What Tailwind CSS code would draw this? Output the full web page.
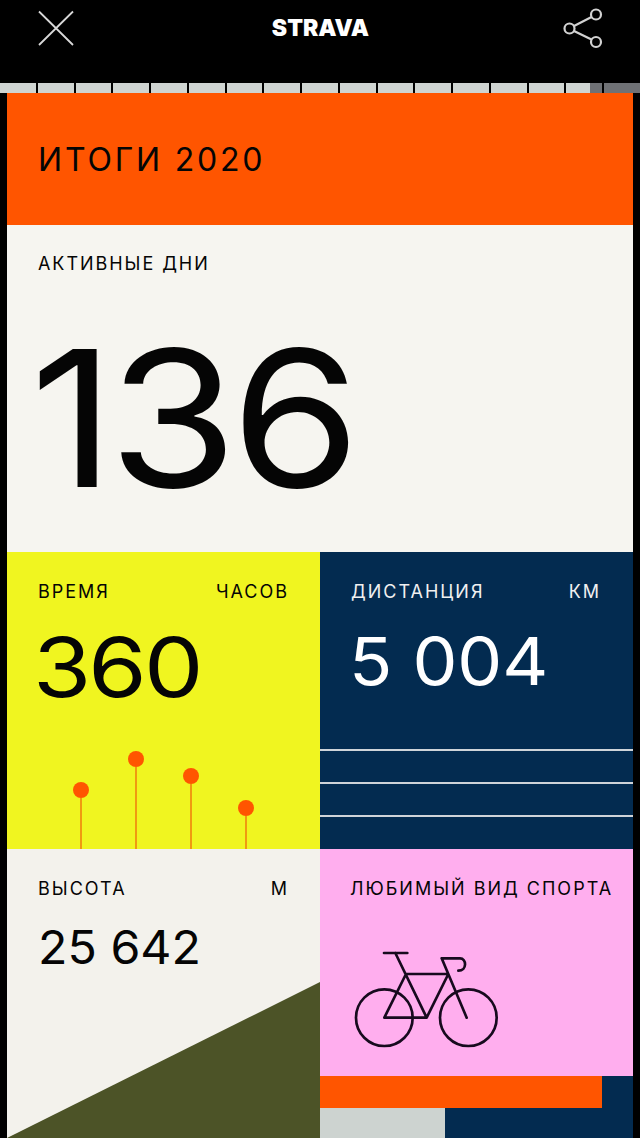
<!doctype html>
<html lang="ru">
<head>
<meta charset="utf-8">
<script src="https://cdn.jsdelivr.net/npm/@tailwindcss/browser@4"></script>
</head>
<body class="bg-black">
<div class="w-[640px] h-[1138px] overflow-hidden bg-black font-['Inter',sans-serif] text-[#050505] flex flex-col">
  <header class="h-[83px] flex items-start justify-between pl-[38px] pr-[35px] pt-[10px]">
    <svg class="w-[36px] h-[36px]" viewBox="0 0 36 36" fill="none" stroke="#d8d8d8" stroke-width="1.8"><path d="M1 1.5 35 35M35 1.5 1 35"/></svg>
    <div class="mt-[5px] ml-[4px] text-white font-black text-[23px] leading-[26px] tracking-[0px]">STRAVA</div>
    <svg class="w-[42px] h-[44px] -mt-[2px]" viewBox="0 0 42 44" fill="none" stroke="#d2d2d2" stroke-width="2.200"><circle cx="33" cy="6.500" r="5"/><circle cx="6.500" cy="20.500" r="5"/><circle cx="33" cy="34" r="5"/><path d="M11 18 28.500 9M11 23 28.500 31.500"/></svg>
  </header>
  <div class="h-[10px] flex gap-[2px] bg-black">
    <div class="flex-1 bg-[#cfd4d1]"></div><div class="flex-1 bg-[#cfd4d1]"></div><div class="flex-1 bg-[#cfd4d1]"></div><div class="flex-1 bg-[#cfd4d1]"></div><div class="flex-1 bg-[#cfd4d1]"></div><div class="flex-1 bg-[#cfd4d1]"></div><div class="flex-1 bg-[#cfd4d1]"></div><div class="flex-1 bg-[#cfd4d1]"></div><div class="flex-1 bg-[#cfd4d1]"></div><div class="flex-1 bg-[#cfd4d1]"></div><div class="flex-1 bg-[#cfd4d1]"></div><div class="flex-1 bg-[#cfd4d1]"></div><div class="flex-1 bg-[#cfd4d1]"></div><div class="flex-1 bg-[#cfd4d1]"></div><div class="flex-1 bg-[#cfd4d1]"></div>
    <div class="flex-1 bg-[#6f7175]"><div class="h-full w-[66%] bg-[#cfd4d1]"></div></div>
    <div class="flex-1 bg-[#6f7175]"></div>
  </div>
  <main class="mx-[7px] flex-1 flex flex-col">
    <section class="h-[132px] bg-[#ff5500] pl-[31px] pt-[49px]">
      <h1 class="text-[32px] leading-[36px] font-normal tracking-[2.800px]">ИТОГИ 2020</h1>
    </section>
    <section class="h-[327px] bg-[#f6f5f0] pl-[31px] pt-[29px]">
      <div class="text-[18px] leading-[20px] tracking-[1.950px]">АКТИВНЫЕ ДНИ</div>
      <div class="mt-[44px] -ml-[8px] text-[190px] leading-[200px] tracking-[-6px] origin-left scale-x-[1.1] font-normal">136</div>
    </section>
    <div class="h-[297px] grid grid-cols-[313px_313px]">
      <section class="relative bg-[#f0f520] pl-[31px] pr-[31px] pt-[30px]">
        <div class="flex justify-between text-[18px] leading-[20px] tracking-[2px]"><span>ВРЕМЯ</span><span>ЧАСОВ</span></div>
        <div class="mt-[24px] -ml-[5px] text-[82px] leading-[84px] tracking-[-2.5px] origin-left scale-x-[1.15] font-normal">360</div>
        <div class="absolute bottom-0 left-[66px] flex items-end gap-[39px]">
          <div class="w-[16px] flex flex-col items-center"><div class="w-[16px] h-[16px] rounded-full bg-[#ff5500]"></div><div class="w-[2px] h-[51px] bg-[#f09a10]"></div></div>
          <div class="w-[16px] flex flex-col items-center"><div class="w-[16px] h-[16px] rounded-full bg-[#ff5500]"></div><div class="w-[2px] h-[82px] bg-[#f09a10]"></div></div>
          <div class="w-[16px] flex flex-col items-center"><div class="w-[16px] h-[16px] rounded-full bg-[#ff5500]"></div><div class="w-[2px] h-[65px] bg-[#f09a10]"></div></div>
          <div class="w-[16px] flex flex-col items-center"><div class="w-[16px] h-[16px] rounded-full bg-[#ff5500]"></div><div class="w-[2px] h-[33px] bg-[#f09a10]"></div></div>
        </div>
      </section>
      <section class="relative bg-[#032b50] text-white pl-[31px] pr-[32px] pt-[30px]">
        <div class="flex justify-between text-[18px] leading-[20px] tracking-[2px] text-[#f0f0f0]"><span>ДИСТАНЦИЯ</span><span>КМ</span></div>
        <div class="mt-[17px] -ml-[2px] text-[66px] leading-[84px] tracking-[0px] whitespace-nowrap origin-left scale-x-[1.08]">5 004</div>
        <div class="absolute left-0 right-0 top-[197px] flex flex-col gap-[31px]">
          <div class="h-[2px] bg-[#cfd4d9]"></div><div class="h-[2px] bg-[#cfd4d9]"></div><div class="h-[2px] bg-[#cfd4d9]"></div>
        </div>
      </section>
    </div>
    <div class="flex-1 grid grid-cols-[313px_313px]">
      <section class="relative bg-[#f3f2ec] pl-[31px] pr-[31px] pt-[30px]">
        <div class="flex justify-between text-[18px] leading-[20px] tracking-[2px]"><span>ВЫСОТА</span><span>М</span></div>
        <div class="mt-[20px] text-[46px] leading-[56px] whitespace-nowrap origin-left scale-x-[1.05]">25 642</div>
        <svg class="absolute left-0 bottom-0 w-[313px] h-[156px]" viewBox="0 0 313 156"><polygon points="0,156 313,0 313,156" fill="#4c5327"/></svg>
      </section>
      <section class="flex flex-col bg-[#032b50]">
        <div class="h-[227px] bg-[#ffaeee] pl-[30px] pt-[30px]">
          <div class="text-[18px] leading-[20px] tracking-[2px] whitespace-nowrap">ЛЮБИМЫЙ ВИД СПОРТА</div>
          <svg class="mt-[50px] w-[150px] h-[100px]" viewBox="90 85 450 300" fill="none" stroke="#170a1e" stroke-width="8" stroke-linejoin="round" stroke-linecap="round">
            <circle cx="193" cy="291" r="85"/><circle cx="445" cy="291" r="85"/>
            <path d="M192 97H262M226 97 320 291H193L258 160H385L320 291M365 113 440 291M365 113H420C440 113 442 150 415 150"/>
          </svg>
        </div>
        <div class="h-[32px] w-[282px] bg-[#ff5500]"></div>
        <div class="flex-1 w-[125px] bg-[#cdd3d0]"></div>
      </section>
    </div>
  </main>
</div>
</body>
</html>
